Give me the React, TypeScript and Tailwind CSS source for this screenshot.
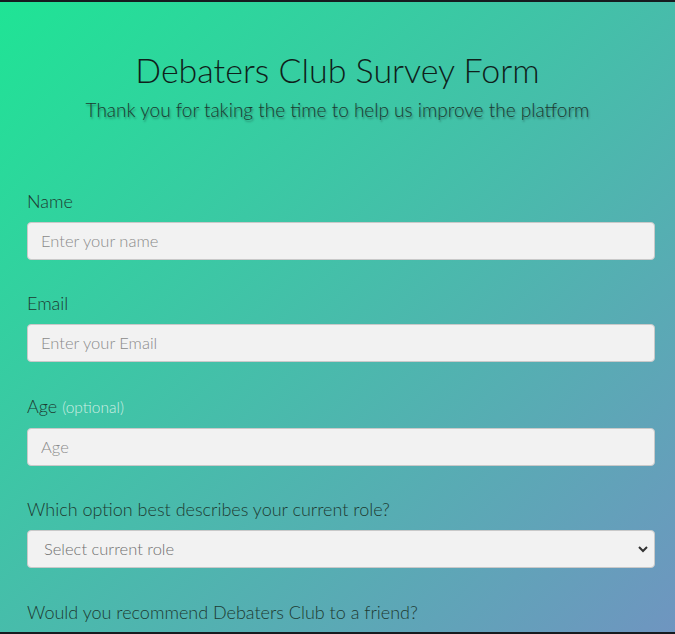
export default function App() {
  const inputCls =
    "w-full h-[38px] rounded-[4px] border border-[#c9c9c9] bg-[#f2f2f2] px-[13px] text-[16.5px] placeholder:text-[#8a8a8a] outline-none";
  return (
    <div className="h-[634px] overflow-hidden border-y-2 border-[#161b1f] bg-[linear-gradient(to_bottom_right,#1fe495,#6f95c0)] font-['Lato','Noto_Sans',sans-serif] font-light text-[#1d3a31]">
      <header className="pt-[48px] text-center">
        <h1 className="text-[34px] leading-[40px] text-[#0f1f1b]">Debaters Club Survey Form</h1>
        <p className="mt-[6px] text-[19px] text-[#1c3a30] [text-shadow:1px_2px_2px_rgba(0,0,0,0.35)]">
          Thank you for taking the time to help us improve the platform
        </p>
      </header>

      <form className="mt-[64px] pl-[27px] pr-[20px] flex flex-col gap-[31.6px]">
        <div>
          <label className="block text-[18px] leading-[24px] mb-[9px]">Name</label>
          <input className={inputCls} placeholder="Enter your name" />
        </div>
        <div>
          <label className="block text-[18px] leading-[24px] mb-[9px]">Email</label>
          <input className={inputCls} placeholder="Enter your Email" />
        </div>
        <div>
          <label className="block text-[18px] leading-[24px] mb-[9px]">
            Age <span className="text-[15.5px] text-[#cdeee3]">(optional)</span>
          </label>
          <input className={inputCls} placeholder="Age" />
        </div>
        <div>
          <label className="block text-[18px] leading-[24px] mb-[9px]">
            Which option best describes your current role?
          </label>
          <div className="relative">
            <select className="w-full h-[38px] appearance-none rounded-[4px] border border-[#c9c9c9] bg-[#f2f2f2] pl-[16px] text-[16.5px] text-[#6f6f6f] outline-none">
              <option>Select current role</option>
            </select>
            <svg
              className="absolute right-[7px] top-[15px]"
              width="10"
              height="8"
              viewBox="0 0 10 8"
              fill="none"
              stroke="#333"
              strokeWidth="2"
            >
              <path d="M1 2l4 4 4-4" />
            </svg>
          </div>
        </div>
        <div>
          <label className="block text-[18px] leading-[24px]">
            Would you recommend Debaters Club to a friend?
          </label>
        </div>
      </form>
    </div>
  );
}
